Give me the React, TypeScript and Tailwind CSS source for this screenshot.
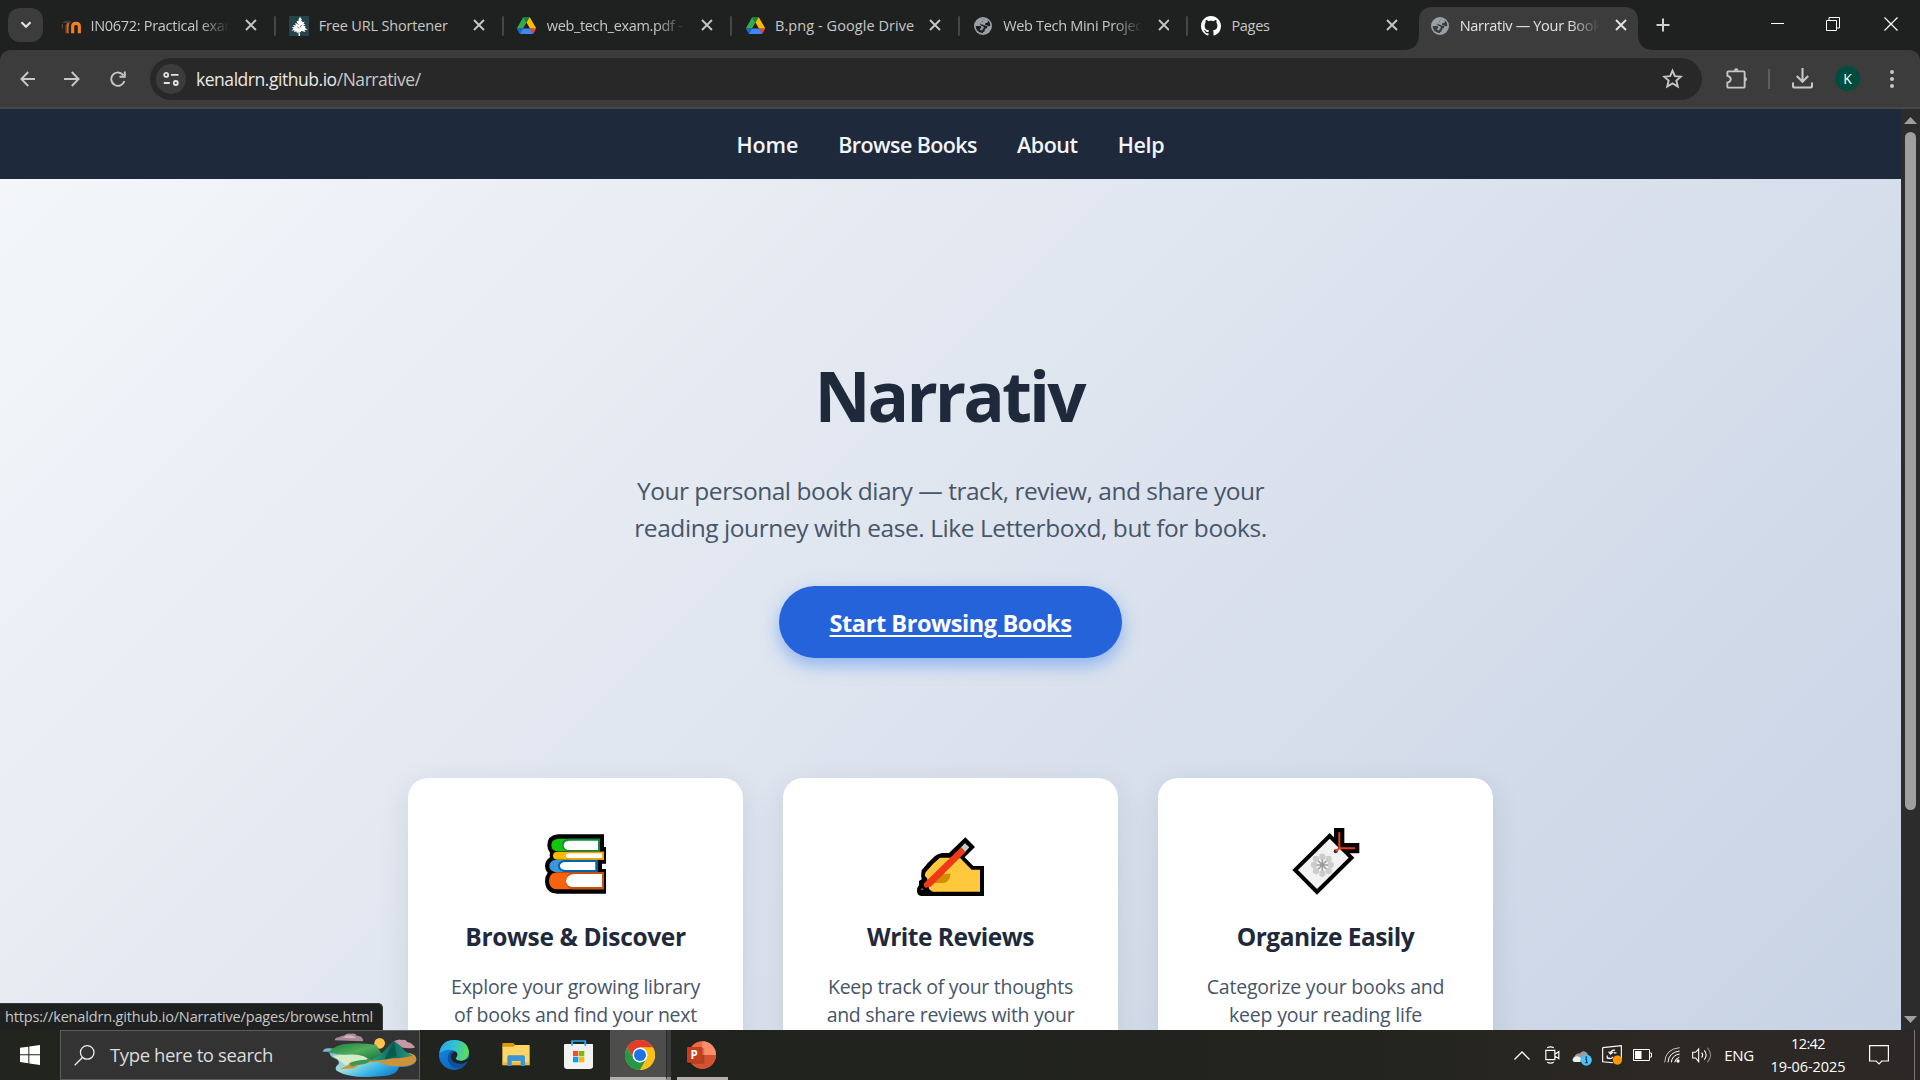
import type { ReactNode } from "react";

type IconProps = { className?: string };

function MoodleIcon() {
  return (
    <svg viewBox="0 0 60 60" className="h-5 w-5">
      <defs>
        <linearGradient id="mood" x1="0" x2="1">
          <stop offset="0" stopColor="#8a4a1e" />
          <stop offset="0.5" stopColor="#f08122" />
        </linearGradient>
      </defs>
      <path d="M2 21 L16 14 L31 16 L27 25 L15 21 Z" fill="#4a4038" />
      <path d="M4 24v13" stroke="#7a4a28" strokeWidth="3" />
      <path d="M18 52V31q0-5 5-6" fill="none" stroke="url(#mood)" strokeWidth="9" />
      <path d="M35 52V31q0-9 10-9t10 9v21" fill="none" stroke="#f08122" strokeWidth="9.500" />
    </svg>
  );
}

function TreeIcon() {
  return (
    <svg viewBox="0 0 60 60" className="h-5 w-5">
      <rect width="60" height="60" fill="#27434a" />
      <path
        fill="#fff"
        d="M33 2l6 9-3 1 5 6-3 1 9-2-3 6 6 3-8 2 9 4-4 3 9 6-10 1 4 6-9-2-5-1 0 4-4-2 1 13h-4l-1-13-4 5-2-6-7 3 2-6-10 1 7-6-6-4 9-1-5-6 9 1-3-7 7 2-2-8 5 1 1-6z"
      />
      <path d="M25 32l6 5M38 27l-5 7M24 22l5 4" stroke="#27434a" strokeWidth="2" />
    </svg>
  );
}

function DriveIcon() {
  return (
    <svg viewBox="0 0 87.3 78" className="h-[17px] w-[19px]">
      <path d="m6.600 66.850 3.850 6.650c.8 1.400 1.950 2.500 3.300 3.300l13.750-23.800h-27.500c0 1.550.4 3.100 1.200 4.500z" fill="#1a66d8" />
      <path d="m43.650 25-13.750-23.800c-1.350.8-2.500 1.900-3.300 3.300l-25.400 44a9.060 9.060 0 0 0 -1.200 4.500h27.500z" fill="#34a853" />
      <path d="m73.550 76.800c1.350-.8 2.500-1.900 3.300-3.300l1.600-2.750 7.650-13.250c.8-1.400 1.200-2.950 1.200-4.500h-27.502l5.852 11.500z" fill="#ea4335" />
      <path d="m43.650 25 13.750-23.800c-1.350-.8-2.900-1.200-4.500-1.200h-18.500c-1.600 0-3.150.45-4.500 1.200z" fill="#188038" />
      <path d="m59.800 53h-32.300l-13.750 23.800c1.350.8 2.900 1.200 4.500 1.200h50.800c1.600 0 3.150-.45 4.500-1.200z" fill="#4285f4" />
      <path d="m73.400 26.500-12.700-22c-.8-1.400-1.950-2.500-3.300-3.300l-13.750 23.800 16.150 28h27.450c0-1.550-.4-3.100-1.200-4.500z" fill="#fbbc04" />
    </svg>
  );
}

function GlobeIcon({ hole }: { hole: string }) {
  return (
    <svg viewBox="0 0 54 54" className="h-[18px] w-[18px]">
      <circle cx="27" cy="27" r="27" fill="#9aa0a6" />
      <path
        fill={hole}
        d="M34 6q-7 0-8 5 2 4-2 5-7 1-7 6 8-1 13 3 3 1 7 1 4 1 3 5-1 4-6 4-2 3-2 7-1 3-5 3 0 3 1 4Q6 47 5 27h14q5 3 2 7-2 2-4 2 1 3 4 4h4q0-5 4-6 2-3-2-6-6-1-8-4-3-3 1-6 4-1 5-5 0-4 9-7z"
      />
      <path fill={hole} d="M39 8q10 6 10 18-4 3-8 0-3-1-7-2-3-3 1-6 6 0 7-4 0-3-3-6z" />
    </svg>
  );
}

function GithubIcon() {
  return (
    <svg viewBox="0 0 16 16" className="h-5 w-5" fill="#fff">
      <path d="M8 0C3.580 0 0 3.580 0 8c0 3.540 2.290 6.530 5.470 7.590.4.070.55-.17.55-.38 0-.19-.01-.82-.01-1.490-2.010.37-2.530-.49-2.690-.94-.09-.23-.48-.94-.82-1.130-.28-.15-.68-.52-.01-.53.63-.01 1.080.58 1.230.82.72 1.210 1.870.87 2.330.66.070-.52.28-.87.51-1.070-1.780-.2-3.640-.89-3.640-3.950 0-.87.31-1.590.82-2.150-.08-.2-.36-1.020.080-2.120 0 0 .67-.21 2.200.82.64-.18 1.320-.27 2-.27s1.360.09 2 .27c1.530-1.040 2.200-.82 2.200-.82.44 1.100.16 1.920.080 2.120.51.56.82 1.270.82 2.150 0 3.070-1.870 3.750-3.650 3.950.29.25.54.73.54 1.480 0 1.070-.01 1.930-.01 2.200 0 .21.15.46.55.38A8.010 8.010 0 0 0 16 8c0-4.420-3.580-8-8-8z" />
    </svg>
  );
}

function CloseIcon({ className }: IconProps) {
  return (
    <svg viewBox="0 0 12 12" className={className} fill="none" stroke="currentColor" strokeWidth="1.9">
      <path d="M1 1l10 10M11 1L1 11" />
    </svg>
  );
}

type Tab = { title: string; tracking: string; icon: ReactNode; fade?: boolean; active?: boolean; divider?: boolean };

const tabs: Tab[] = [
  { title: "IN0672: Practical exam", tracking: "tracking-[-0.3px]", icon: <MoodleIcon />, fade: true, divider: true },
  { title: "Free URL Shortener", tracking: "tracking-[-0.17px]", icon: <TreeIcon />, divider: true },
  { title: "web_tech_exam.pdf - G", tracking: "tracking-[-0.35px]", icon: <DriveIcon />, fade: true, divider: true },
  { title: "B.png - Google Drive", tracking: "tracking-[0.07px]", icon: <DriveIcon />, divider: true },
  { title: "Web Tech Mini Project", tracking: "tracking-[-0.31px]", icon: <GlobeIcon hole="#1f2120" />, fade: true, divider: true },
  { title: "Pages", tracking: "tracking-[-0.3px]", icon: <GithubIcon /> },
  { title: "Narrativ — Your Book", tracking: "tracking-[-0.3px]", icon: <GlobeIcon hole="#3c3c3c" />, fade: true, active: true },
];

function BrowserTab({ tab }: { tab: Tab }) {
  return (
    <div className="relative h-[43px] w-[228.2px] shrink-0">
      {tab.active && (
        <svg viewBox="0 0 252 43" className="absolute top-0 left-[-13.7px] h-[43px] w-[252px]">
          <path fill="#3c3c3c" d="M0 43q16 0 16-16V14Q16 0 30 0H221q14 0 14 14V27q0 16 16 16z" />
        </svg>
      )}
      <div className="relative flex h-[37px] items-center pl-[13px]">
        <span className="flex w-5 justify-center">{tab.icon}</span>
        <span
          className={`ml-[10px] w-[141px] overflow-hidden text-[14.5px] leading-5 whitespace-nowrap ${tab.tracking} ${tab.active ? "text-[#e3e3e3]" : "text-[#c7c7c7]"} ${tab.fade ? "[mask-image:linear-gradient(to_right,#000_78%,transparent_99%)]" : ""}`}
        >
          {tab.title}
        </span>
        <CloseIcon className={`mb-px ml-[14px] h-3 w-3 ${tab.active ? "text-[#e3e3e3]" : "text-[#c7c7c7]"}`} />
        {tab.divider && <span className="ml-[17px] h-5 w-[2px] rounded bg-[#464746]" />}
      </div>
    </div>
  );
}

function TitleBar() {
  return (
    <div className="flex h-[50px] shrink-0 bg-[#1f2120] pt-[7px]">
      <div className="mt-px ml-2 flex h-[34px] w-[35px] items-center justify-center rounded-[12px] bg-[#3c3c3c]">
        <svg viewBox="0 0 12 8" className="h-2 w-3" fill="none" stroke="#e3e3e3" strokeWidth="2.2">
          <path d="M1.500 1.300L6 5.800l4.500-4.500" />
        </svg>
      </div>
      <div className="ml-[4.5px] flex">
        {tabs.map((t) => (
          <BrowserTab key={t.title} tab={t} />
        ))}
      </div>
      <svg viewBox="0 0 14 14" className="mt-[11px] ml-[11.6px] h-[14px] w-[14px]" stroke="#d0d0d0" strokeWidth="2">
        <path d="M7 .5v13M.5 7h13" />
      </svg>
      <div className="ml-auto flex h-[34px] items-center">
        <svg viewBox="0 0 14 14" className="h-[14px] w-[14px]" stroke="#fff" strokeWidth="1" shapeRendering="crispEdges">
          <path d="M1 6.500h13" />
        </svg>
        <svg viewBox="0 0 14 14" className="ml-[42px] h-[14px] w-[14px]" fill="none" stroke="#fff" strokeWidth="1">
          <path d="M.5 3.500h10v10h-10zM3 3V.5h10.500v10.500H11" />
        </svg>
        <svg viewBox="0 0 14 14" className="mr-[22px] ml-[44px] h-[14px] w-[14px]" stroke="#fff" strokeWidth="1.200">
          <path d="M.5.5l13 13M13.500.5l-13 13" />
        </svg>
      </div>
    </div>
  );
}

function Toolbar() {
  return (
    <div className="h-[59px] shrink-0 bg-[#1f2120]">
      <div className="flex h-[59px] items-center rounded-t-[10px] border-b-2 border-[#474747] bg-[#3c3c3c]">
        <svg viewBox="0 0 16 16" className="ml-5 h-4 w-4" fill="none" stroke="#c7c7c7" strokeWidth="1.9">
          <path d="M15 8H2M8.200 1L1.400 8l6.800 7" />
        </svg>
        <svg viewBox="0 0 16 16" className="ml-[28px] h-4 w-4" fill="none" stroke="#c7c7c7" strokeWidth="1.900">
          <path d="M0 8h14M7.800 1l6.800 7-6.800 7" />
        </svg>
        <svg viewBox="0 0 16 16" className="ml-[30px] h-4 w-4" fill="none" stroke="#c7c7c7" strokeWidth="1.900">
          <path d="M14.400 10A6.700 6.700 0 1 1 13.400 4.200M9.500 5.800h5.300V.5" />
        </svg>
        <div className="ml-6 flex h-[42px] w-[1552px] items-center rounded-full bg-[#282828]">
          <span className="ml-[6px] flex h-[30px] w-[30px] items-center justify-center rounded-full bg-[#3c3c3c]">
            <svg viewBox="0 0 16 14" className="h-[14px] w-4" fill="none" stroke="#e3e3e3" strokeWidth="1.800">
              <circle cx="3.200" cy="2.900" r="2" />
              <path d="M8 2.900h7.500M.8 11h6" />
              <circle cx="12.800" cy="11" r="2" />
            </svg>
          </span>
          <span className="ml-[10px] pt-px text-[17.500px] tracking-[-0.46px] whitespace-nowrap text-[#e8e8e8]">
            kenaldrn.github.io<span className="text-[#c7c7c7]">/Narrative/</span>
          </span>
          <svg viewBox="0 0 24 24" className="mr-[19px] ml-auto h-[21px] w-[21px]" fill="none" stroke="#c7c7c7" strokeWidth="2.200">
            <path d="M12 3l2.700 6.300 6.900.6-5.200 4.500 1.600 6.700L12 17.500l-6 3.600 1.600-6.700-5.200-4.500 6.900-.6z" />
          </svg>
        </div>
        <svg viewBox="0 0 62 62" className="mb-px ml-6 h-[21px] w-[21px]" fill="none" stroke="#c7c7c7" strokeWidth="5.500">
          <path d="M7 10h45q3 0 3 3v42q0 3-3 3H7q-3 0-3-3V43q10-2 10-10T4 23V13q0-3 3-3z" />
          <path d="M23 8q1-7 7-7t7 7zM56 26q6 2 6 7t-6 7z" fill="#c7c7c7" stroke="none" />
        </svg>
        <span className="ml-[21px] h-5 w-[2px] bg-[#5e5e5e]" />
        <svg viewBox="0 0 21 21" className="ml-[22px] h-[21px] w-[21px]" fill="none" stroke="#c7c7c7" strokeWidth="2.100">
          <path d="M10.500 0v13M4.800 8l5.700 5.700L16.200 8M1 14.500V18q0 1.500 1.500 1.500h16Q20 19.500 20 18v-3.500" />
        </svg>
        <span className="ml-[22px] flex h-[25px] w-[25px] items-center justify-center rounded-full bg-[#004d40] text-[14px] text-white">K</span>
        <svg viewBox="0 0 4 18" className="ml-[30px] h-[18px] w-1" fill="#c7c7c7">
          <circle cx="2" cy="2" r="2" />
          <circle cx="2" cy="9" r="2" />
          <circle cx="2" cy="16" r="2" />
        </svg>
      </div>
    </div>
  );
}

const booksOutline =
  "M612 193H474Q442 196 442 226q0 14 8 22-2 6 0 14-15 10-15 26 0 13 8 20-8 10-8 26 2 36 36 37H618V297H606V281H618V231H612z";

function BooksEmoji() {
  return (
    <svg viewBox="414 171 225 225" className="h-[75px] w-[75px]">
      <path d={booksOutline} fill="#000" />
      <path d="M600 206H475q-21 2-21 19 0 19 21 19H600z" fill="#16c60c" />
      <path d="M600 206H505q-19 3-19 19t19 19h95z" fill="#10893e" />
      <path d="M594 212H508q-17 1-17 14 0 14 17 14H594z" fill="#fff" />
      <path d="M612 245H474q-15 0-15 12t15 12H612z" fill="#ffb900" />
      <path d="M612 245H512q-17 2-17 12t17 12H612z" fill="#f0a30a" />
      <path d="M606 250H508q-11 0-11 7t11 7H606z" fill="#fff" />
      <path d="M594 270H464q-16 4-16 18t16 18H594z" fill="#3a96dd" />
      <path d="M594 270H492q-18 4-18 18t18 18H594z" fill="#0063b1" />
      <path d="M586 276H496q-16 1-16 12t16 12H586z" fill="#fff" />
      <path d="M612 307H470q-23 4-23 25 0 24 24 26H612z" fill="#f7630c" />
      <path d="M612 307H520q-22 4-22 25t18 26h96z" fill="#ca5010" />
      <path d="M606 312H522q-23 3-24 21 1 17 20 18H606z" fill="#fff" />
    </svg>
  );
}

function WritingEmoji() {
  return (
    <svg viewBox="429 171 225 225" className="h-[75px] w-[75px]">
      <path d="M586 202l29 29-31 31 26 26h32v90H454q-13-2-13-16 0-10 6-17v-12l8-5q-3-14 0-27 16-22 40-43 9-7 22-9h20z" fill="#000" />
      <path d="M515 263h28l28 2 34 34h25v66H490q-13-2-14-15l-5-26q-10-4-4-17 20-26 42-43z" fill="#ffc83d" />
      <path d="M505 311h37q-3 27-25 28h-32z" fill="#d48c00" />
      <path d="M573 232l14 14L482 350l-23 5 3-15z" fill="#f03a17" />
      <path d="M585 220l13 12-12 13-13-13z" fill="#ccc" />
      <path d="M459 341l6 12 22 11h-25q-6 0-6-7z" fill="#000" />
      <path d="M453 361l3-7 5 5z" fill="#888" />
    </svg>
  );
}

const petals: [number, number][] = [[547, 260], [566, 267], [572, 285], [566, 303], [547, 311], [528, 303], [522, 285], [528, 267]];

function LabelEmoji() {
  return (
    <svg viewBox="444 171 225 225" className="h-[75px] w-[75px]">
      <path d="M569 189l74 74-112 111-74-74z" fill="#000" />
      <path d="M582 174h31v45h45v31H598l-16-18z" fill="#000" />
      <path d="M569 206l57 57-95 94-57-57z" fill="#f2f2f2" />
      {petals.map(([x, y]) => (
        <circle key={`${x}-${y}`} cx={x} cy={y} r="9.500" fill="#ccc" />
      ))}
      <path d="M547 268v34M530 285h34M535 273l24 24M559 273l-24 24" stroke="#a0a0a0" strokeWidth="5" />
      <circle cx="547" cy="285" r="6" fill="#999" />
      <circle cx="587" cy="244" r="6" fill="#333" />
      <path d="M588 243l10-8V187M598 235h47" fill="none" stroke="#f03a17" strokeWidth="6" />
    </svg>
  );
}

type Feature = { title: string; tracking: string; lines: string[]; bodyTracking: string; emoji: ReactNode };

const features: Feature[] = [
  { title: "Browse & Discover", tracking: "tracking-[-0.37px]", lines: ["Explore your growing library", "of books and find your next", "favorite read."], bodyTracking: "tracking-[-0.27px]", emoji: <BooksEmoji /> },
  { title: "Write Reviews", tracking: "tracking-[-0.5px]", lines: ["Keep track of your thoughts", "and share reviews with your", "friends."], bodyTracking: "tracking-[-0.28px]", emoji: <WritingEmoji /> },
  { title: "Organize Easily", tracking: "tracking-[-0.52px]", lines: ["Categorize your books and", "keep your reading life", "organized."], bodyTracking: "tracking-[-0.2px]", emoji: <LabelEmoji /> },
];

function WebPage() {
  return (
    <div className="h-[921px] w-[1901px] overflow-hidden">
      <div className="flex h-[1197px] flex-col items-center bg-[linear-gradient(135deg,#f5f7fa_0%,#c3cfe2_100%)] text-[#1e293b]">
        <nav className="flex h-[70px] w-full shrink-0 items-center justify-center gap-10 bg-[#1e293b] pt-[2px] text-[21.500px] font-semibold text-[#f1f5f9]">
          <a className="tracking-[-0.15px]">Home</a>
          <a className="tracking-[-0.58px]">Browse Books</a>
          <a className="tracking-[-0.45px]">About</a>
          <a className="tracking-[-0.3px]">Help</a>
        </nav>
        <h1 className="mt-[164px] mr-[3px] text-[69px] leading-[104px] font-bold tracking-[-2.900px]">Narrativ</h1>
        <p className="mt-[25px] text-center text-[24.500px] leading-[37px] text-[#475569]">
          <span className="tracking-[-0.48px]">Your personal book diary — track, review, and share your</span>
          <br />
          <span className="tracking-[-0.43px]">reading journey with ease. Like Letterboxd, but for books.</span>
        </p>
        <a className="mt-[40px] flex h-[72px] w-[343px] shrink-0 items-center justify-center rounded-full bg-[#2563db] pt-[3px] text-[23.500px] font-bold tracking-[-0.42px] text-white underline decoration-2 underline-offset-[3px] shadow-[0_7px_18px_rgba(59,130,246,0.5)]">
          Start Browsing Books
        </a>
        <div className="mt-[120px] flex gap-10">
          {features.map((f) => (
            <div key={f.title} className="flex h-[335px] w-[335px] flex-col items-center rounded-[20px] bg-white pt-[49px] shadow-[0_8px_30px_rgba(30,41,59,0.1)]">
              {f.emoji}
              <h3 className={`mt-[16px] text-[24.500px] leading-[38px] font-bold ${f.tracking}`}>{f.title}</h3>
              <p className={`mt-[17px] text-center text-[19.500px] leading-[28px] text-[#475569] ${f.bodyTracking}`}>
                {f.lines.map((l) => (
                  <span key={l} className="block">{l}</span>
                ))}
              </p>
            </div>
          ))}
        </div>
      </div>
    </div>
  );
}

function Scrollbar() {
  return (
    <div className="flex h-[921px] w-[19px] flex-col items-center bg-[#2c2c2c]">
      <svg viewBox="0 0 13 7" className="mt-2 h-[7px] w-[13px]" fill="#9f9f9f">
        <path d="M6.500 0L13 7H0z" />
      </svg>
      <div className="mt-2 h-[678px] w-[11px] rounded-full bg-[#9f9f9f]" />
      <svg viewBox="0 0 13 7" className="mt-auto mb-[7px] h-[7px] w-[13px]" fill="#9f9f9f">
        <path d="M6.500 7L13 0H0z" />
      </svg>
    </div>
  );
}

function IslandArt() {
  return (
    <svg viewBox="965 155 290 140" className="h-[46.700px] w-[96.700px]">
      <defs>
        <linearGradient id="sea" x1="0" x2="1" y1="0.2" y2="0.8">
          <stop offset="0" stopColor="#7fb4dc" />
          <stop offset="0.4" stopColor="#9fe0dc" />
          <stop offset="0.65" stopColor="#36b4e6" />
          <stop offset="1" stopColor="#0a5fc0" />
        </linearGradient>
        <linearGradient id="hill" x1="0" x2="1" y1="0" y2="1">
          <stop offset="0" stopColor="#1e7a3c" />
          <stop offset="0.5" stopColor="#4fae5c" />
          <stop offset="1" stopColor="#146a40" />
        </linearGradient>
        <linearGradient id="peak" x1="0" x2="1">
          <stop offset="0" stopColor="#2fa67e" />
          <stop offset="0.5" stopColor="#0c6a60" />
          <stop offset="1" stopColor="#2c9a80" />
        </linearGradient>
      </defs>
      <path d="M1006 180q2-10 14-9 4-6 14-5 8-9 22-6 14-2 16 6 14 0 18 10 4 3 0 7z" fill="#a98a9b" />
      <path d="M1030 172q12-10 30-6 10 4 8 8z" fill="#d4b3ba" />
      <circle cx="1141" cy="189" r="16" fill="#ffc24a" />
      <path d="M1180 187q6-8 14-8 8-3 12 0 14-2 18 6 12 2 16 8 8 4 6 9-30 5-48-5z" fill="#c39aa4" />
      <path d="M970 214q4-12 20-10l120 12 120 8q20 2 21 14-2 22-52 22-6 26-56 28-90 8-130-16-10-10 4-20 6-12-12-18-14-6-15-20z" fill="url(#sea)" />
      <path d="M1020 226q50-6 90-2l120-6q22 4 21 20-6 20-52 20-40 0-60-14l-50 4-26 16-42 3 28-14 2-14q-10-8-31-13z" fill="#cf9238" />
      <path d="M1000 226q60-8 104 2l12 12-60 4-16 12q-20-16-40-30z" fill="#d3ecc8" />
      <path d="M987 216q24-26 60-26 40-4 84 4l20 34q-20 14-40 12-14-16-50-18-44 4-74-6z" fill="url(#hill)" />
      <path d="M1110 242q30-14 48-34 16-20 26-26 20 12 32 30l24 14q-34 8-60 8-30 6-70 8z" fill="url(#peak)" />
      <path d="M1184 183l-28 54 36-10z" fill="#0a5a50" />
      <path d="M1050 250q20-12 50-12 10-8 12-4 4 12-20 18-20 0-34 6z" fill="#3c9650" />
    </svg>
  );
}

function EdgeIcon() {
  return (
    <svg viewBox="0 0 90 90" className="h-[30px] w-[30px]">
      <defs>
        <linearGradient id="edgeTop" x1="0" x2="1" y1="0.3" y2="0.5">
          <stop offset="0" stopColor="#2aa4e8" />
          <stop offset="0.5" stopColor="#32c4d4" />
          <stop offset="1" stopColor="#62dc4c" />
        </linearGradient>
        <linearGradient id="edgeLow" x1="0" x2="0.6" y1="0" y2="1">
          <stop offset="0" stopColor="#1b8ee0" />
          <stop offset="1" stopColor="#0c62c0" />
        </linearGradient>
      </defs>
      <circle cx="45" cy="45" r="45" fill="url(#edgeLow)" />
      <path d="M2 34Q10 0 46 0q42 2 44 38-2 22-24 24-18 0-16-8 6-4 5-10-3-15-24-15Q12 30 2 40z" fill="url(#edgeTop)" />
      <path d="M26 54q0-18 16-22 14 2 13 12-1 5-5 10 0 8 16 9 10 0 22-6-8 20-28 28Q28 84 26 54z" fill="#10509c" />
      <path d="M36 52q0-14 12-17 8 3 7 9-1 5-5 10 0 8 16 9 10 0 24-10v8l-5 4q-12 7-25 6-22-2-24-19z" fill="#20221f" />
    </svg>
  );
}

function FolderIcon() {
  return (
    <svg viewBox="0 0 84 70" className="h-[23.300px] w-[28px]">
      <path d="M1 2q0-2 2-2h31l5 5v9H1z" fill="#d99a0a" />
      <path d="M1 11h34l5-5h41q2 0 2 2v59H3q-2 0-2-2z" fill="#ffd566" />
      <path d="M1 58h81v8H3z" fill="#f0b93a" />
      <path d="M16 69V42q0-5 5-5h43q5 0 5 5v27H56V54H29v15z" fill="#3a94d8" />
    </svg>
  );
}

function StoreIcon() {
  return (
    <svg viewBox="0 0 88 88" className="h-[29.300px] w-[29.300px]">
      <path d="M24 18V3h40v15" fill="none" stroke="#22a6ee" strokeWidth="5" />
      <path d="M0 15q0-3 3-3h82q3 0 3 3v62q0 10-10 10H10Q0 87 0 77z" fill="#f2f2f2" />
      <path d="M24 6v11M64 6v11" stroke="#22a6ee" strokeWidth="5" />
      <path d="M27 33h16v16H27z" fill="#f25022" />
      <path d="M45 33h16v16H45z" fill="#7fba00" />
      <path d="M27 51h16v16H27z" fill="#00a4ef" />
      <path d="M45 51h16v16H45z" fill="#ffb900" />
    </svg>
  );
}

function ChromeIcon() {
  return (
    <svg viewBox="0 0 90 90" className="h-[30px] w-[30px]">
      <circle cx="45" cy="45" r="45" fill="#fbc116" />
      <path d="M6 22.500A45 45 0 0 1 84 22.500H45L25.500 56.300z" fill="#e33b2e" />
      <path d="M6 22.500L25.500 56.300 45 67.500 64.500 56.300 45 90A45 45 0 0 1 6 22.500z" fill="#229a48" />
      <path d="M45 22.500H84A45 45 0 0 1 45 90L64.500 56.300z" fill="#fbc116" />
      <circle cx="45" cy="45" r="22.500" fill="#fff" />
      <circle cx="45" cy="45" r="18" fill="#1a73e8" />
    </svg>
  );
}

function PowerPointIcon() {
  return (
    <div className="relative h-7 w-[29px]">
      <svg viewBox="0 0 87 84" className="h-7 w-[29px]">
        <circle cx="46" cy="42" r="41" fill="#ed6c47" />
        <path d="M46 1a41 41 0 0 1 41 41H46z" fill="#ff8f6b" />
        <path d="M5 42h82a41 41 0 0 1-82 0z" fill="#d35230" />
        <rect x="2" y="20" width="50" height="48" rx="4" fill="#000" opacity="0.2" />
        <rect x="0" y="18" width="46" height="47" rx="4" fill="#c43e1c" />
      </svg>
      <span className="absolute top-[6px] left-[3.500px] text-[11.500px] leading-4 font-bold text-white">P</span>
    </div>
  );
}

function Tray() {
  const cell = "flex w-[30px] justify-center";
  return (
    <div className="ml-auto flex h-full items-center text-white">
      <span className={cell}>
        <svg viewBox="0 0 16 9" className="h-[9px] w-4" fill="none" stroke="#fff" strokeWidth="1.300">
          <path d="M.5 8.500L8 1l7.500 7.500" />
        </svg>
      </span>
      <span className={cell}>
        <svg viewBox="0 0 44 54" className="h-[18px] w-[15px]" fill="none" stroke="#fff" strokeWidth="3.500">
          <path d="M2 13h27v28H2zM29 25l12-8v21l-12-8M6 5q10-5 20 0M6 49q10 5 20 0" />
        </svg>
      </span>
      <span className={cell}>
        <svg viewBox="0 0 60 52" className="mt-1 h-[17px] w-5">
          <path d="M4 40q-6-8 2-15 4-12 18-12 6-8 15-5 10 4 9 12-6 18-18 20z" fill="#9b9b9b" />
          <path d="M2 36q-2-12 12-14 10 0 13 8l-3 10H8z" fill="#f0f0f0" />
          <circle cx="43" cy="34" r="17" fill="#4cc2ff" />
          <path d="M40 31h4v11M39 42h9" fill="none" stroke="#12303f" strokeWidth="3.500" />
          <circle cx="43" cy="25" r="2.500" fill="#12303f" />
        </svg>
      </span>
      <span className={cell}>
        <svg viewBox="0 0 61 61" className="h-5 w-5" fill="none" stroke="#fff" strokeWidth="3.500">
          <path d="M2 8l57-6v40M2 8v43l32 3M40 16q-12-2-14 9M20 20l6 8 8-7M36 24h8M18 40q10 4 16-4M16 32v8h8" />
          <circle cx="47" cy="46" r="14" fill="#ff9800" stroke="none" />
        </svg>
      </span>
      <span className={cell}>
        <svg viewBox="0 0 19 12" className="h-3 w-[19px]" fill="none" stroke="#fff">
          <path d="M.5.5h16v11H.5zM17 4h1.500v4H17" />
          <path d="M2 2h6.500v8H2z" fill="#fff" stroke="none" />
        </svg>
      </span>
      <span className={cell}>
        <svg viewBox="0 0 48 48" className="h-4 w-4" fill="none" stroke="#fff" strokeWidth="3">
          <path d="M2 46Q4 6 47 2" opacity="0.75" />
          <path d="M12 46q2-30 35-34M22 46q2-22 25-25" />
          <path d="M32 46q2-12 14-15" />
          <circle cx="42" cy="42" r="5" fill="#fff" stroke="none" />
        </svg>
      </span>
      <span className={cell}>
        <svg viewBox="0 0 60 54" className="h-[18px] w-5" fill="none" stroke="#fff" strokeWidth="3.200">
          <path d="M2 19h9L20 9v38L11 36H2zM29 20q6 7 0 15M37 13q11 14 0 28" />
          <path d="M46 5q20 22 0 44" opacity="0.45" />
        </svg>
      </span>
      <span className="w-[44px] text-center text-[15px] tracking-[-0.3px]">ENG</span>
      <div className="flex w-[94px] flex-col items-center text-[14.500px] leading-[23px]">
        <span className="tracking-[-0.600px]">12:42</span>
        <span className="tracking-[-0.05px]">19-06-2025</span>
      </div>
      <span className="flex w-[48px] justify-center">
        <svg viewBox="0 0 20 20" className="h-5 w-5" fill="none" stroke="#fff" strokeWidth="1.200">
          <path d="M.6.6h18.800v15.400h-6.600L10 18.800 7.200 16H.6z" />
        </svg>
      </span>
      <span className="mr-[5px] ml-[11px] h-full w-px bg-[#777]" />
    </div>
  );
}

function Taskbar() {
  return (
    <div className="flex h-[50px] shrink-0 items-center bg-[linear-gradient(90deg,#22241e_0%,#20221e_45%,#25251f_75%,#2d2825_88%,#2c2827_100%)]">
      <svg viewBox="0 0 60 60" className="ml-5 h-5 w-5" fill="#fff">
        <path d="M0 8.500L25 5v23H0zM28 4.600L60 0v28H28zM0 31h25v23.500L0 51zM28 31h32v29l-32-4.500z" />
      </svg>
      <div className="ml-5 flex h-[50px] w-[360px] items-center border border-[#5c5c5c] bg-[#333]">
        <svg viewBox="0 0 62 62" className="ml-[13px] h-[21px] w-[21px]" fill="none" stroke="#f0f0f0" strokeWidth="3.800">
          <circle cx="39" cy="22" r="20" />
          <path d="M25 37L2 60" />
        </svg>
        <span className="ml-[15px] text-[18.500px] tracking-[-0.38px] whitespace-nowrap text-[#dcdcdc]">Type here to search</span>
        <span className="mr-[1px] ml-auto">
          <IslandArt />
        </span>
      </div>
      <span className="ml-[3px] flex w-[61px] justify-center"><EdgeIcon /></span>
      <span className="flex w-[63px] justify-center"><FolderIcon /></span>
      <span className="flex w-[63px] justify-center"><StoreIcon /></span>
      <span className="flex h-full">
        <span className="flex h-full w-[56px] items-center justify-center border-b-[3px] border-[#b3adad] bg-[#4d4d4b] pt-[3px] pl-1"><ChromeIcon /></span>
        <span className="h-full w-[5px] border-b-[3px] border-l border-b-[#8f8a8a] border-l-[#2a2a28] bg-[#3c3c3a]" />
      </span>
      <span className="ml-[6px] flex h-full w-[51px] items-center justify-center border-b-[3px] border-[#b3adad] pt-[3px] pr-[2px]"><PowerPointIcon /></span>
      <Tray />
    </div>
  );
}

export default function App() {
  return (
    <div className="relative flex h-[1080px] w-[1920px] flex-col overflow-hidden font-['Open_Sans',sans-serif]">
      <TitleBar />
      <Toolbar />
      <div className="flex h-[921px] shrink-0">
        <WebPage />
        <Scrollbar />
      </div>
      <div className="absolute top-[1003px] left-0 flex h-[27px] w-[383px] items-center rounded-tr-[5px] border-t border-r border-[#3a3b3a] bg-[#1f2120] pl-[5px] text-[14.500px] tracking-[-0.16px] whitespace-nowrap text-[#c7c7c7]">
        https://kenaldrn.github.io/Narrative/pages/browse.html
      </div>
      <Taskbar />
    </div>
  );
}
